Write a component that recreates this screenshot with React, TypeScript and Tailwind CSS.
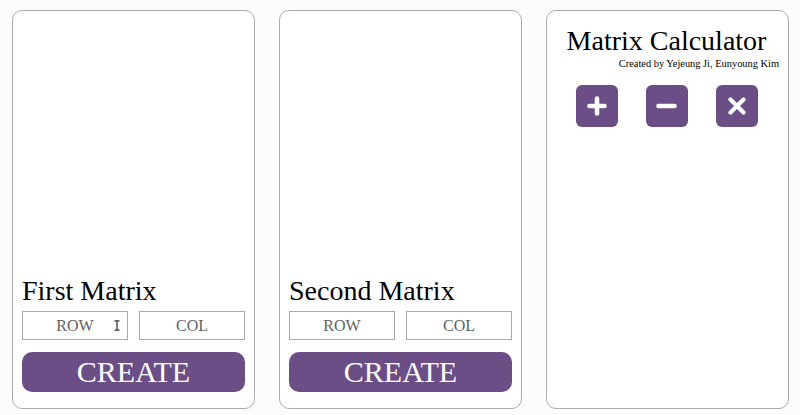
import React from "react";

const serif = { fontFamily: '"Liberation Serif", "Times New Roman", serif' };

function MatrixPanel({ title, cursor }: { title: string; cursor?: boolean }) {
  return (
    <div className="w-[243px] h-[399px] shrink-0 border border-[#acacac] rounded-[10px] bg-white flex flex-col justify-end px-[9px] pb-[16px]">
      <div className="text-[28px] leading-[32px] text-black">{title}</div>
      <div className="flex gap-[11px] mt-[4px]">
        <div className="relative w-[106px] h-[29px]">
          <input
            className="w-full h-full border border-[#a9a9a9] bg-white text-center text-[16px] text-[#555] placeholder:text-[#5f5f5f] outline-none"
            style={serif}
            placeholder="ROW"
          />
          {cursor && (
            <svg className="absolute left-[92px] top-[9px]" width="6" height="11" viewBox="0 0 6 11">
              <path d="M0.5 0.8 H5.5 M3 0.8 V10.2 M0.5 10.2 H5.5" stroke="#2f3a3a" strokeWidth="1.3" fill="none" />
            </svg>
          )}
        </div>
        <input
          className="w-[106px] h-[29px] border border-[#a9a9a9] bg-white text-center text-[16px] text-[#555] placeholder:text-[#5f5f5f] outline-none"
          style={serif}
          placeholder="COL"
        />
      </div>
      <button
        className="mt-[12px] h-[40px] w-full rounded-[10px] bg-[#6b4e86] text-white text-[30px] leading-[40px]"
        style={serif}
      >
        CREATE
      </button>
    </div>
  );
}

function OpButton({ children }: { children: React.ReactNode }) {
  return (
    <button className="w-[42px] h-[42px] rounded-[6px] bg-[#6b4e86] flex items-center justify-center">
      {children}
    </button>
  );
}

export default function App() {
  return (
    <div
      className="w-[800px] h-[415px] bg-[#fdfcfd] flex gap-[24px] pl-[12px] pt-[10px] overflow-hidden"
      style={serif}
    >
      <MatrixPanel title="First Matrix" cursor />
      <MatrixPanel title="Second Matrix" />
      <div className="w-[243px] h-[399px] shrink-0 border border-[#acacac] rounded-[10px] bg-white flex flex-col pt-[14px] pr-[9px]">
        <div className="text-[28px] leading-[32px] text-black text-center pl-[7px]">Matrix Calculator</div>
        <div className="text-[10.4px] leading-[13px] text-black text-right">Created by Yejeung Ji, Eunyoung Kim</div>
        <div className="flex justify-center gap-[28px] mt-[15px] pl-[7px]">
          <OpButton>
            <svg width="20" height="20" viewBox="0 0 20 20">
              <path d="M10 2.5 V17.5 M2.5 10 H17.5" stroke="white" strokeWidth="4.6" strokeLinecap="round" fill="none" />
            </svg>
          </OpButton>
          <OpButton>
            <svg width="21" height="20" viewBox="0 0 21 20">
              <path d="M2.5 10 H18.5" stroke="white" strokeWidth="4.6" strokeLinecap="round" fill="none" />
            </svg>
          </OpButton>
          <OpButton>
            <svg width="18" height="18" viewBox="0 0 18 18">
              <path d="M2.5 2.5 L15.5 15.5 M15.5 2.5 L2.5 15.5" stroke="white" strokeWidth="4.2" strokeLinecap="round" fill="none" />
            </svg>
          </OpButton>
        </div>
      </div>
    </div>
  );
}
